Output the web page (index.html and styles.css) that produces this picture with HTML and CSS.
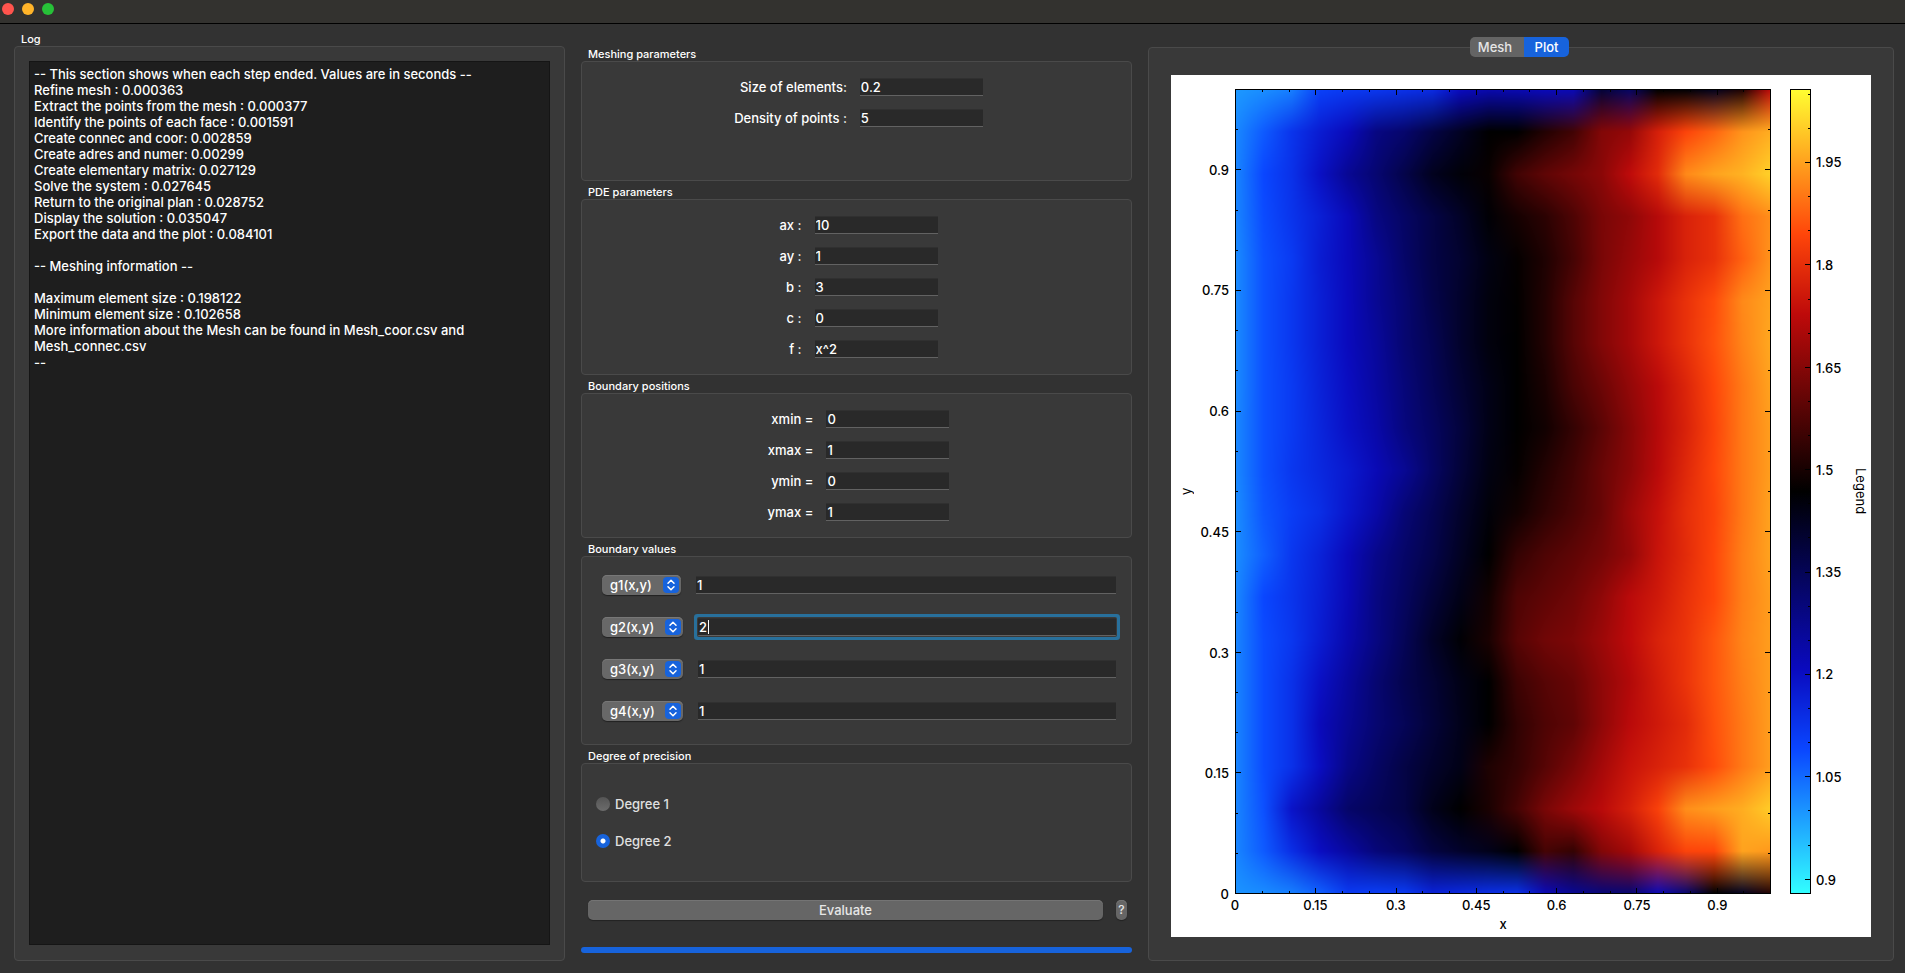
FILE: index.html
```
<!DOCTYPE html>
<html lang="en">
<head>
<meta charset="utf-8">
<title>Finite element solver</title>
<link rel="stylesheet" href="styles.css">
</head>
<body>
<header class="titlebar">
  <button class="light light-close" aria-label="Close"></button>
  <button class="light light-min" aria-label="Minimize"></button>
  <button class="light light-zoom" aria-label="Zoom"></button>
</header>

<main class="workspace">
  <section class="column log-column">
    <label class="group-title" for="log">Log</label>
    <div class="box log-box">
      <textarea id="log" class="log" readonly spellcheck="false">-- This section shows when each step ended. Values are in seconds --
Refine mesh : 0.000363
Extract the points from the mesh : 0.000377
Identify the points of each face : 0.001591
Create connec and coor: 0.002859
Create adres and numer: 0.00299
Create elementary matrix: 0.027129
Solve the system : 0.027645
Return to the original plan : 0.028752
Display the solution : 0.035047
Export the data and the plot : 0.084101

-- Meshing information --

Maximum element size : 0.198122
Minimum element size : 0.102658
More information about the Mesh can be found in Mesh_coor.csv and Mesh_connec.csv
--</textarea>
    </div>
  </section>

  <form class="column params-column">
    <h2 class="group-title">Meshing parameters</h2>
    <div class="box form-box mesh-box">
      <div class="fields">
        <label for="size">Size of elements:</label><input class="field" id="size" type="text" value="0.2">
        <label for="density">Density of points :</label><input class="field" id="density" type="text" value="5">
      </div>
    </div>

    <h2 class="group-title">PDE parameters</h2>
    <div class="box form-box">
      <div class="fields">
        <label for="ax">ax :</label><input class="field" id="ax" type="text" value="10">
        <label for="ay">ay :</label><input class="field" id="ay" type="text" value="1">
        <label for="b">b :</label><input class="field" id="b" type="text" value="3">
        <label for="c">c :</label><input class="field" id="c" type="text" value="0">
        <label for="f">f :</label><input class="field" id="f" type="text" value="x^2">
      </div>
    </div>

    <h2 class="group-title">Boundary positions</h2>
    <div class="box form-box">
      <div class="fields">
        <label for="xmin">xmin =</label><input class="field" id="xmin" type="text" value="0">
        <label for="xmax">xmax =</label><input class="field" id="xmax" type="text" value="1">
        <label for="ymin">ymin =</label><input class="field" id="ymin" type="text" value="0">
        <label for="ymax">ymax =</label><input class="field" id="ymax" type="text" value="1">
      </div>
    </div>

    <h2 class="group-title">Boundary values</h2>
    <div class="box values-box">
      <div class="value-row">
        <div class="picker picker-first">
          <select class="picker-select" aria-label="Boundary 1 function"><option>g1(x,y)</option></select>
          <svg class="picker-icon" viewBox="0 0 16 16" aria-hidden="true"><path d="M5 6.200L8 3.200L11 6.200M5 9.800L8 12.800L11 9.800"/></svg>
        </div>
        <input class="field" type="text" value="1" aria-label="g1 value">
      </div>
      <div class="value-row">
        <div class="picker">
          <select class="picker-select" aria-label="Boundary 2 function"><option>g2(x,y)</option></select>
          <svg class="picker-icon" viewBox="0 0 16 16" aria-hidden="true"><path d="M5 6.200L8 3.200L11 6.200M5 9.800L8 12.800L11 9.800"/></svg>
        </div>
        <div class="focus-wrap">
          <input class="field" type="text" value="2" aria-label="g2 value">
          <span class="caret"></span>
        </div>
      </div>
      <div class="value-row">
        <div class="picker">
          <select class="picker-select" aria-label="Boundary 3 function"><option>g3(x,y)</option></select>
          <svg class="picker-icon" viewBox="0 0 16 16" aria-hidden="true"><path d="M5 6.200L8 3.200L11 6.200M5 9.800L8 12.800L11 9.800"/></svg>
        </div>
        <input class="field" type="text" value="1" aria-label="g3 value">
      </div>
      <div class="value-row">
        <div class="picker">
          <select class="picker-select" aria-label="Boundary 4 function"><option>g4(x,y)</option></select>
          <svg class="picker-icon" viewBox="0 0 16 16" aria-hidden="true"><path d="M5 6.200L8 3.200L11 6.200M5 9.800L8 12.800L11 9.800"/></svg>
        </div>
        <input class="field" type="text" value="1" aria-label="g4 value">
      </div>
    </div>

    <h2 class="group-title">Degree of precision</h2>
    <div class="box degree-box">
      <label class="degree"><input type="radio" name="degree">Degree 1</label>
      <label class="degree"><input type="radio" name="degree" checked>Degree 2</label>
    </div>

    <div class="actions">
      <button class="push evaluate" type="button">Evaluate</button>
      <button class="push help" type="button">?</button>
    </div>
    <div class="progress" role="progressbar" aria-label="Progress" aria-valuenow="100"></div>
  </form>

  <section class="column view-column">
    <div class="tabs" role="tablist">
      <button class="tab" role="tab" aria-selected="false">Mesh</button>
      <button class="tab tab-active" role="tab" aria-selected="true">Plot</button>
    </div>
    <div class="box view-box">
      <div class="plot">
        <div class="axis-name y-name">y</div>
        <div class="axis y-axis">
          <span style="bottom:0%">0</span><span style="bottom:15%">0.15</span><span style="bottom:30%">0.3</span><span style="bottom:45%">0.45</span><span style="bottom:60%">0.6</span><span style="bottom:75%">0.75</span><span style="bottom:90%">0.9</span>
        </div>
        <div class="field-map"><canvas id="map"></canvas></div>
        <div class="color-bar"><canvas id="bar"></canvas></div>
        <div class="axis bar-axis">
          <span style="bottom:1.8%">0.9</span><span style="bottom:14.5%">1.05</span><span style="bottom:27.3%">1.2</span><span style="bottom:40%">1.35</span><span style="bottom:52.7%">1.5</span><span style="bottom:65.4%">1.65</span><span style="bottom:78.2%">1.8</span><span style="bottom:90.9%">1.95</span>
        </div>
        <div class="axis-name legend">Legend</div>
        <div class="axis x-axis">
          <span style="left:0%">0</span><span style="left:15%">0.15</span><span style="left:30%">0.3</span><span style="left:45%">0.45</span><span style="left:60%">0.6</span><span style="left:75%">0.75</span><span style="left:90%">0.9</span>
        </div>
        <div class="x-name">x</div>
      </div>
    </div>
  </section>
</main>
<script src="plot.js"></script>
</body>
</html>
```
FILE: styles.css
```
* { box-sizing: border-box; }

body {
  margin: 0;
  min-height: 100vh;
  display: flex;
  flex-direction: column;
  background: #323232;
  color: #fff;
  font-family: Inter, "Liberation Sans", sans-serif;
  font-size: 13px;
  line-height: 16px;
  font-weight: 500;
}

button, input, select, textarea {
  font: inherit;
  color: inherit;
  margin: 0;
  border: 0;
  padding: 0;
}

/* Title bar */
.titlebar {
  display: flex;
  gap: 8px;
  height: 24px;
  padding: 3px 2px;
  background: #33322f;
  border-bottom: 1px solid #000;
}
.light { width: 12px; height: 12px; border-radius: 50%; }
.light-close { background: #ff544d; }
.light-min { background: #ffb429; }
.light-zoom { background: #27c138; }

/* Columns */
.workspace {
  flex: 1;
  display: grid;
  grid-template-columns: minmax(0, 551fr) minmax(0, 551fr) minmax(0, 746fr);
  gap: 16px;
  padding: 0 11px 12px 14px;
}
.column { display: flex; flex-direction: column; }

.group-title {
  margin: 0;
  height: 18px;
  padding: 4px 7px 0;
  font-size: 11px;
  line-height: 14px;
  font-weight: 500;
}
.box {
  background: #393939;
  border: 1px solid #4a4a4a;
  border-radius: 4px;
}

/* Log */
.log-column { padding-top: 4px; }
.log-box { flex: 1; display: flex; padding: 14px 14px 15px; }
.log {
  flex: 1;
  resize: none;
  outline: 0;
  padding: 4px;
  background: #1e1e1e;
  border: 1px solid #151515;
}

/* Parameters */
.params-column { padding-top: 19px; }
.form-box { display: flex; justify-content: center; align-items: flex-start; padding: 16px 0 16px 4px; }
.mesh-box { min-height: 120px; }
.fields {
  display: grid;
  grid-template-columns: max-content 123px;
  gap: 13px;
  align-items: center;
}
.fields label { text-align: right; line-height: 18px; }
.field {
  width: 100%;
  height: 18px;
  padding: 0 1px;
  background: #292929;
  border-top: 1px solid #303030;
  border-bottom: 1px solid #626262;
  outline: 0;
}

.values-box { display: grid; gap: 22px; padding: 18px 15px 23px 20px; }
.value-row { display: flex; align-items: center; gap: 15px; }
.picker { position: relative; flex: none; width: 81px; height: 20px; }
.picker-first { width: 79px; }
.picker-select {
  appearance: none;
  display: block;
  width: 100%;
  height: 20px;
  padding: 0 8px;
  background: #686868;
  border-radius: 5px;
  box-shadow: 0 1px 1px #222, inset 0 1px 0 #777;
}
.picker-icon {
  position: absolute;
  right: 2px;
  top: 2px;
  width: 16px;
  height: 16px;
  background: #1763dc;
  border-radius: 4px;
  fill: none;
  stroke: #fff;
  stroke-width: 1.500;
  stroke-linecap: round;
  stroke-linejoin: round;
  pointer-events: none;
}
.focus-wrap { position: relative; flex: 1; height: 18px; }
.focus-wrap .field { display: block; box-shadow: 0 0 0 1px #3a3a3a, 0 0 0 4px #28709c; border-radius: 1px; }
.caret { position: absolute; left: 10px; top: 2px; width: 1px; height: 14px; background: #fff; }

.degree-box { display: flex; flex-direction: column; gap: 21px; padding: 32px 14px; min-height: 119px; color: #e0e0e0; }
.degree { display: flex; align-items: center; gap: 5px; }
.degree input {
  appearance: none;
  width: 14px;
  height: 14px;
  border-radius: 50%;
  background: linear-gradient(#555, #6c6c6c);
}
.degree input:checked { background: radial-gradient(circle, #fff 0 2px, #1763dc 3px); }

.actions { display: flex; gap: 13px; padding: 18px 5px 0 7px; color: #e6e6e6; }
.push {
  height: 20px;
  background: #666;
  border-radius: 5px;
  box-shadow: 0 1px 1px #222, inset 0 1px 0 #747474;
}
.evaluate { flex: 1; }
.help { width: 11px; font-size: 12px; }
.progress { height: 6px; margin: auto 0 8px; border-radius: 3px; background: #1763dc; }

/* Plot view */
.view-column { padding-top: 13px; }
.tabs {
  position: relative;
  z-index: 1;
  display: flex;
  align-self: center;
  height: 20px;
  margin: 0 3px -10px 0;
  border-radius: 5px;
  overflow: hidden;
}
.tab { width: 54px; padding-right: 4px; background: #646464; color: #e6e6e6; }
.tab-active { width: 45px; padding: 0; background: #1763dc; color: #fff; }
.view-box { flex: 1; display: flex; padding: 27px 22px 23px; }
.plot {
  flex: 1;
  display: grid;
  grid-template-columns: 30px 34px minmax(0, 1fr) 19px 21px 40px 20px;
  grid-template-rows: 14px minmax(0, 1fr) 22px 21px;
  background: #fff;
  color: #000;
}
.axis { position: relative; }
.axis span { position: absolute; line-height: 16px; }
.y-axis { grid-area: 2 / 2; }
.y-axis span { right: 6px; margin-bottom: -8px; }
.x-axis { grid-area: 3 / 3; }
.x-axis span { top: 3px; transform: translateX(-50%); }
.bar-axis { grid-area: 2 / 6; }
.bar-axis span { left: 5px; margin-bottom: -8px; }
.field-map { grid-area: 2 / 3; position: relative; }
.color-bar { grid-area: 2 / 5; position: relative; }
canvas { position: absolute; inset: 0; width: 100%; height: 100%; }
.axis-name {
  writing-mode: vertical-rl;
  display: flex;
  justify-content: center;
  align-items: center;
  font-weight: 400;
}
.y-name { grid-area: 2 / 1; transform: rotate(180deg); }
.legend { grid-area: 2 / 7; }
.x-name { grid-area: 4 / 3; text-align: center; }
```
FILE: plot.js
```
// Normalised solution samples, top row first, in thousandths of the colour range.
const samples = [
  [100,110,125,190,200,205,215,225,280,300,295,285,290,435,385,500,495,465,535,720],
  [115,160,210,250,285,350,375,420,460,500,500,540,575,650,670,755,815,850,895,920],
  [118,180,215,270,330,370,415,465,490,510,575,610,635,660,720,775,885,910,925,955],
  [118,175,210,245,285,350,385,420,455,495,525,550,590,640,665,710,760,785,860,890],
  [112,170,200,250,285,330,380,420,445,480,505,535,580,640,675,710,760,785,845,895],
  [112,170,205,245,282,330,370,415,450,485,502,540,600,650,690,740,785,825,885,910],
  [112,170,205,245,282,320,370,405,450,485,500,540,600,650,690,740,785,830,880,915],
  [112,170,200,240,275,315,360,400,440,475,500,530,585,625,670,715,765,820,870,910],
  [115,170,200,235,270,305,355,390,430,475,500,520,560,605,655,710,760,815,870,905],
  [115,170,205,230,255,290,330,385,435,480,505,540,575,620,660,715,770,820,870,905],
  [110,165,195,220,260,305,365,405,450,490,520,555,585,620,680,730,780,815,870,910],
  [110,155,205,240,285,340,380,415,460,500,560,590,610,635,670,735,775,820,875,910],
  [115,180,210,245,290,350,390,435,475,520,590,610,630,665,715,745,785,820,875,905],
  [118,175,205,250,300,350,400,455,495,530,600,630,645,680,720,760,790,835,880,905],
  [118,175,215,270,320,370,410,440,475,500,570,600,620,665,705,750,790,835,875,905],
  [118,175,215,285,330,370,400,435,470,500,555,590,610,665,715,745,775,830,870,905],
  [118,175,215,275,345,385,420,450,475,535,560,600,640,690,735,760,785,825,870,905],
  [118,170,265,320,380,400,420,470,500,530,580,640,680,715,755,810,890,905,920,950],
  [118,160,220,275,315,360,385,425,450,470,500,580,560,650,690,760,815,820,910,900],
  [105,112,125,155,200,195,200,240,230,220,215,290,330,360,370,290,370,500,460,540]
];

const stops = [
  [0, 50, 255, 255], [0.18, 10, 70, 255], [0.28, 10, 10, 190], [0.5, 0, 0, 0],
  [0.72, 190, 10, 10], [0.82, 255, 70, 10], [1, 255, 255, 50]
];

function colour(t) {
  let k = 1;
  while (k < stops.length - 1 && t > stops[k][0]) k++;
  const a = stops[k - 1], b = stops[k];
  const u = (t - a[0]) / (b[0] - a[0]);
  return [1, 2, 3].map(c => a[c] + (b[c] - a[c]) * u);
}

const grid = samples.map(row => row.map(v => colour(v / 1000)));

function prepare(canvas) {
  canvas.width = canvas.clientWidth;
  canvas.height = canvas.clientHeight;
  return canvas.getContext("2d");
}

function drawMap() {
  const canvas = document.getElementById("map");
  const g = prepare(canvas), w = canvas.width, h = canvas.height;
  const n = grid.length - 1;
  const img = g.createImageData(w, h);
  for (let y = 0, p = 0; y < h; y++) {
    const fy = y / (h - 1) * n, j = Math.min(n - 1, Math.floor(fy)), v = fy - j;
    for (let x = 0; x < w; x++) {
      const fx = x / (w - 1) * n, i = Math.min(n - 1, Math.floor(fx)), u = fx - i;
      for (let c = 0; c < 3; c++) {
        const top = grid[j][i][c] * (1 - u) + grid[j][i + 1][c] * u;
        const low = grid[j + 1][i][c] * (1 - u) + grid[j + 1][i + 1][c] * u;
        img.data[p++] = top * (1 - v) + low * v;
      }
      img.data[p++] = 255;
    }
  }
  g.putImageData(img, 0, 0);
  g.fillStyle = "#000";
  for (let k = 0; k < 20; k++) {
    const major = k % 3 === 0;
    const x = Math.round(k / 20 * (w - 1)), y = Math.round((1 - k / 20) * (h - 1));
    const len = major ? 6 : 3;
    g.fillRect(x, 0, 1, len);
    g.fillRect(x, h - len, 1, len);
    g.fillRect(0, y, len, 1);
    g.fillRect(w - len, y, len, 1);
  }
  g.strokeRect(0.5, 0.5, w - 1, h - 1);
}

function drawBar() {
  const canvas = document.getElementById("bar");
  const g = prepare(canvas), w = canvas.width, h = canvas.height;
  const ramp = g.createLinearGradient(0, h, 0, 0);
  stops.forEach(s => ramp.addColorStop(s[0], `rgb(${s[1]},${s[2]},${s[3]})`));
  g.fillStyle = ramp;
  g.fillRect(0, 0, w, h);
  g.fillStyle = "#000";
  const low = 0.879, span = 1.178;
  for (let k = 0; k < 24; k++) {
    const y = Math.round((1 - (0.9 + k * 0.05 - low) / span) * (h - 1));
    const len = k % 3 === 0 ? 6 : 3;
    g.fillRect(w - len, y, len, 1);
  }
  g.strokeRect(0.5, 0.5, w - 1, h - 1);
}

function draw() { drawMap(); drawBar(); }
window.addEventListener("resize", draw);
draw();
```
